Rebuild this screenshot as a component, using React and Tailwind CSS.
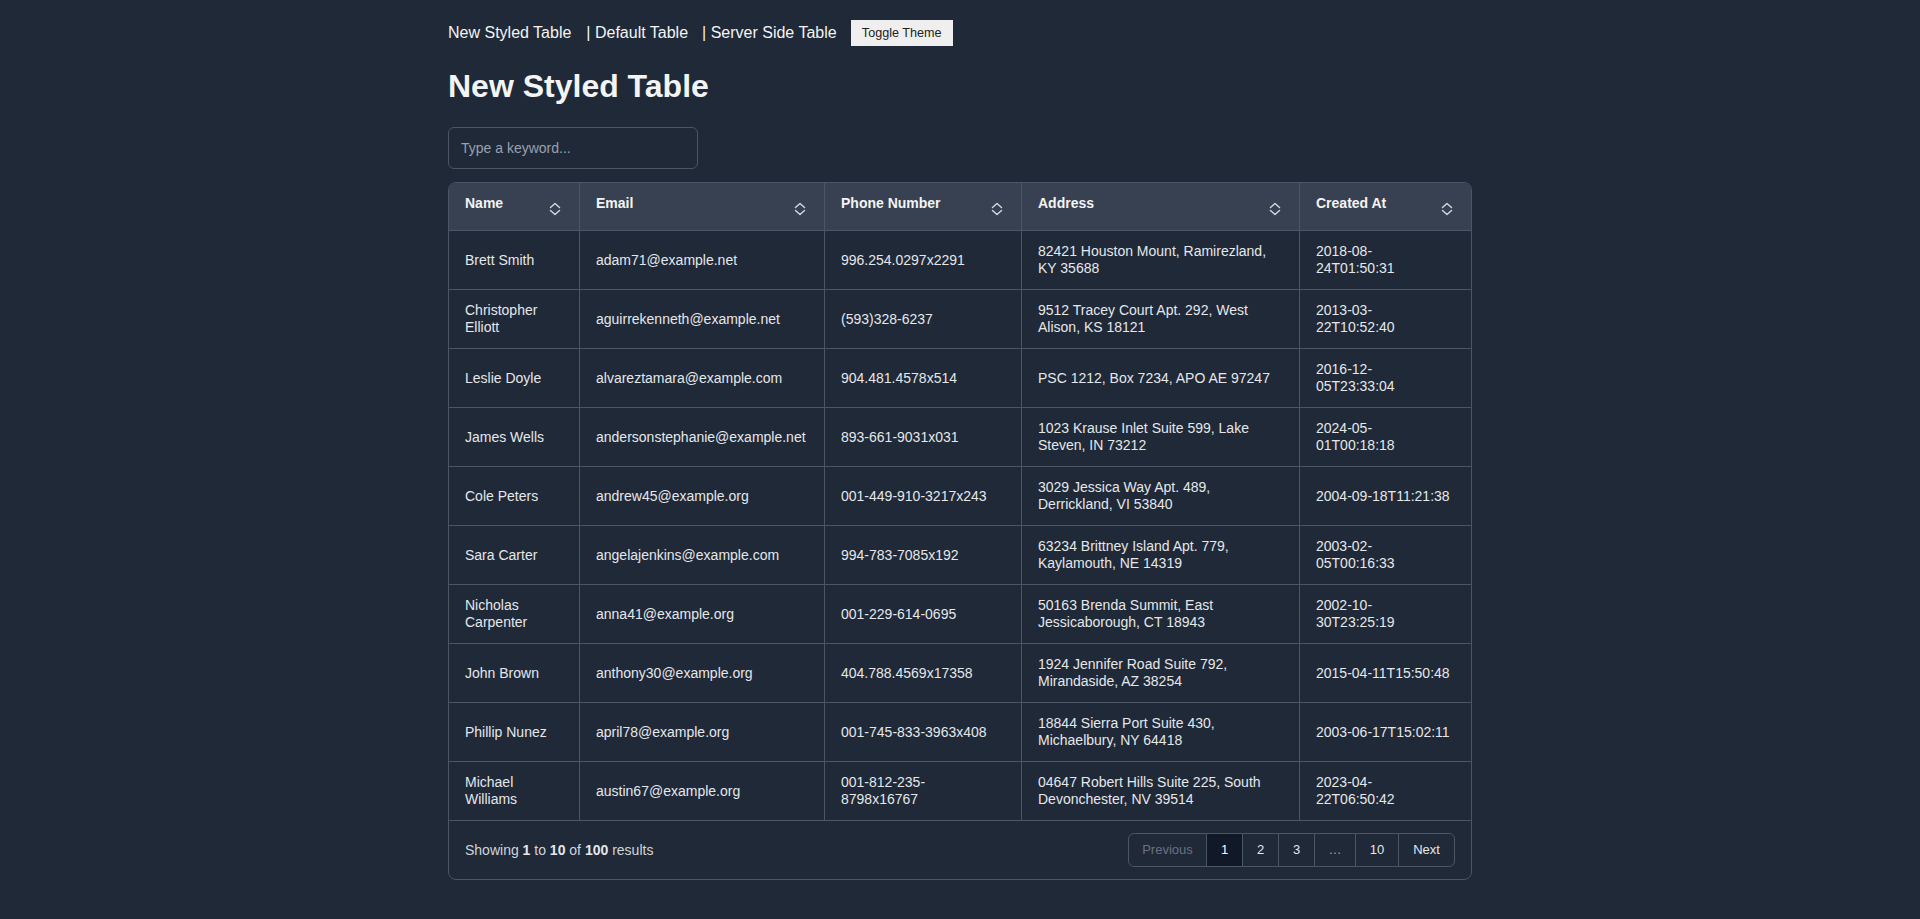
import React from "react";

const rows = [
  { name: ["Brett Smith"], email: "adam71@example.net", phone: ["996.254.0297x2291"], address: ["82421 Houston Mount, Ramirezland,", "KY 35688"], created: ["2018-08-", "24T01:50:31"] },
  { name: ["Christopher", "Elliott"], email: "aguirrekenneth@example.net", phone: ["(593)328-6237"], address: ["9512 Tracey Court Apt. 292, West", "Alison, KS 18121"], created: ["2013-03-", "22T10:52:40"] },
  { name: ["Leslie Doyle"], email: "alvareztamara@example.com", phone: ["904.481.4578x514"], address: ["PSC 1212, Box 7234, APO AE 97247"], created: ["2016-12-", "05T23:33:04"] },
  { name: ["James Wells"], email: "andersonstephanie@example.net", phone: ["893-661-9031x031"], address: ["1023 Krause Inlet Suite 599, Lake", "Steven, IN 73212"], created: ["2024-05-", "01T00:18:18"] },
  { name: ["Cole Peters"], email: "andrew45@example.org", phone: ["001-449-910-3217x243"], address: ["3029 Jessica Way Apt. 489,", "Derrickland, VI 53840"], created: ["2004-09-18T11:21:38"] },
  { name: ["Sara Carter"], email: "angelajenkins@example.com", phone: ["994-783-7085x192"], address: ["63234 Brittney Island Apt. 779,", "Kaylamouth, NE 14319"], created: ["2003-02-", "05T00:16:33"] },
  { name: ["Nicholas", "Carpenter"], email: "anna41@example.org", phone: ["001-229-614-0695"], address: ["50163 Brenda Summit, East", "Jessicaborough, CT 18943"], created: ["2002-10-", "30T23:25:19"] },
  { name: ["John Brown"], email: "anthony30@example.org", phone: ["404.788.4569x17358"], address: ["1924 Jennifer Road Suite 792,", "Mirandaside, AZ 38254"], created: ["2015-04-11T15:50:48"] },
  { name: ["Phillip Nunez"], email: "april78@example.org", phone: ["001-745-833-3963x408"], address: ["18844 Sierra Port Suite 430,", "Michaelbury, NY 64418"], created: ["2003-06-17T15:02:11"] },
  { name: ["Michael", "Williams"], email: "austin67@example.org", phone: ["001-812-235-", "8798x16767"], address: ["04647 Robert Hills Suite 225, South", "Devonchester, NV 39514"], created: ["2023-04-", "22T06:50:42"] },
];

function Lines({ lines }) {
  return (
    <div className="whitespace-nowrap">
      {lines.map((l, i) => (
        <div key={i}>{l}</div>
      ))}
    </div>
  );
}

function SortIcon() {
  return (
    <svg width="16" height="16" viewBox="0 0 16 16" fill="none" className="mt-2 shrink-0">
      <path d="M3.5 6.5 L8 2.5 L12.5 6.5" stroke="#d1d5db" strokeWidth="1.5" strokeLinecap="round" strokeLinejoin="round" />
      <path d="M3.5 9.5 L8 13.5 L12.5 9.5" stroke="#d1d5db" strokeWidth="1.5" strokeLinecap="round" strokeLinejoin="round" />
    </svg>
  );
}

const headers = ["Name", "Email", "Phone Number", "Address", "Created At"];

const td = "border-b border-gray-600 px-4 py-3 align-middle text-sm leading-[17px] text-gray-200";

export default function App() {
  return (
    <div className="min-h-screen bg-[#1f2937] font-['Liberation_Sans',Arial,sans-serif]">
      <div className="mx-auto w-[1024px] pt-5 pb-10">
        <nav className="flex h-[26px] items-center text-base leading-6 text-gray-100">
          <span>New Styled Table</span>
          <span className="ml-[15px]">| Default Table</span>
          <span className="ml-[14px]">| Server Side Table</span>
          <button className="ml-[14px] flex h-[26px] w-[102px] items-center justify-center bg-[#efefef] text-[12.6px] text-[#222]">
            Toggle Theme
          </button>
        </nav>

        <h1 className="mt-[20px] text-[32px] font-bold leading-[40px] text-gray-100">New Styled Table</h1>

        <input
          type="text"
          placeholder="Type a keyword..."
          className="mt-[21px] block h-[42px] w-[250px] rounded-md border border-gray-600 bg-transparent px-3 text-sm text-gray-200 outline-none placeholder:text-gray-400"
        />

        <div className="mt-[13px] overflow-hidden rounded-lg border border-gray-600">
          <table className="w-full table-fixed border-separate border-spacing-0">
            <colgroup>
              <col className="w-[131px]" />
              <col className="w-[245px]" />
              <col className="w-[197px]" />
              <col className="w-[278px]" />
              <col />
            </colgroup>
            <thead>
              <tr>
                {headers.map((h, i) => (
                  <th
                    key={h}
                    className={`border-b border-gray-600 bg-[#374151] px-4 pb-[13px] pt-[10px] text-left align-top text-sm font-bold leading-5 text-gray-100 ${i < 4 ? "border-r" : ""}`}
                  >
                    <div className="flex items-start justify-between">
                      <span>{h}</span>
                      <SortIcon />
                    </div>
                  </th>
                ))}
              </tr>
            </thead>
            <tbody>
              {rows.map((r, idx) => (
                <tr key={idx}>
                  <td className={`${td} border-r`}>
                    <Lines lines={r.name} />
                  </td>
                  <td className={`${td} border-r`}>
                    <div className="whitespace-nowrap">{r.email}</div>
                  </td>
                  <td className={`${td} border-r`}>
                    <Lines lines={r.phone} />
                  </td>
                  <td className={`${td} border-r`}>
                    <Lines lines={r.address} />
                  </td>
                  <td className={td}>
                    <Lines lines={r.created} />
                  </td>
                </tr>
              ))}
            </tbody>
          </table>

          <div className="flex items-center justify-between px-4 py-3">
            <div className="text-sm text-gray-300">
              Showing <span className="font-bold text-gray-200">1</span> to{" "}
              <span className="font-bold text-gray-200">10</span> of{" "}
              <span className="font-bold text-gray-200">100</span> results
            </div>
            <div className="flex h-[34px] overflow-hidden rounded-md border border-gray-600 text-[13px]">
              <div className="flex w-[78px] items-center justify-center border-r border-gray-600 text-gray-500">Previous</div>
              <div className="flex w-[36px] items-center justify-center border-r border-gray-600 bg-[#111827] text-white">1</div>
              <div className="flex w-[36px] items-center justify-center border-r border-gray-600 text-gray-200">2</div>
              <div className="flex w-[36px] items-center justify-center border-r border-gray-600 text-gray-200">3</div>
              <div className="flex w-[41px] items-center justify-center border-r border-gray-600 text-gray-400">…</div>
              <div className="flex w-[43px] items-center justify-center border-r border-gray-600 text-gray-200">10</div>
              <div className="flex w-[55px] items-center justify-center text-gray-200">Next</div>
            </div>
          </div>
        </div>
      </div>
    </div>
  );
}
